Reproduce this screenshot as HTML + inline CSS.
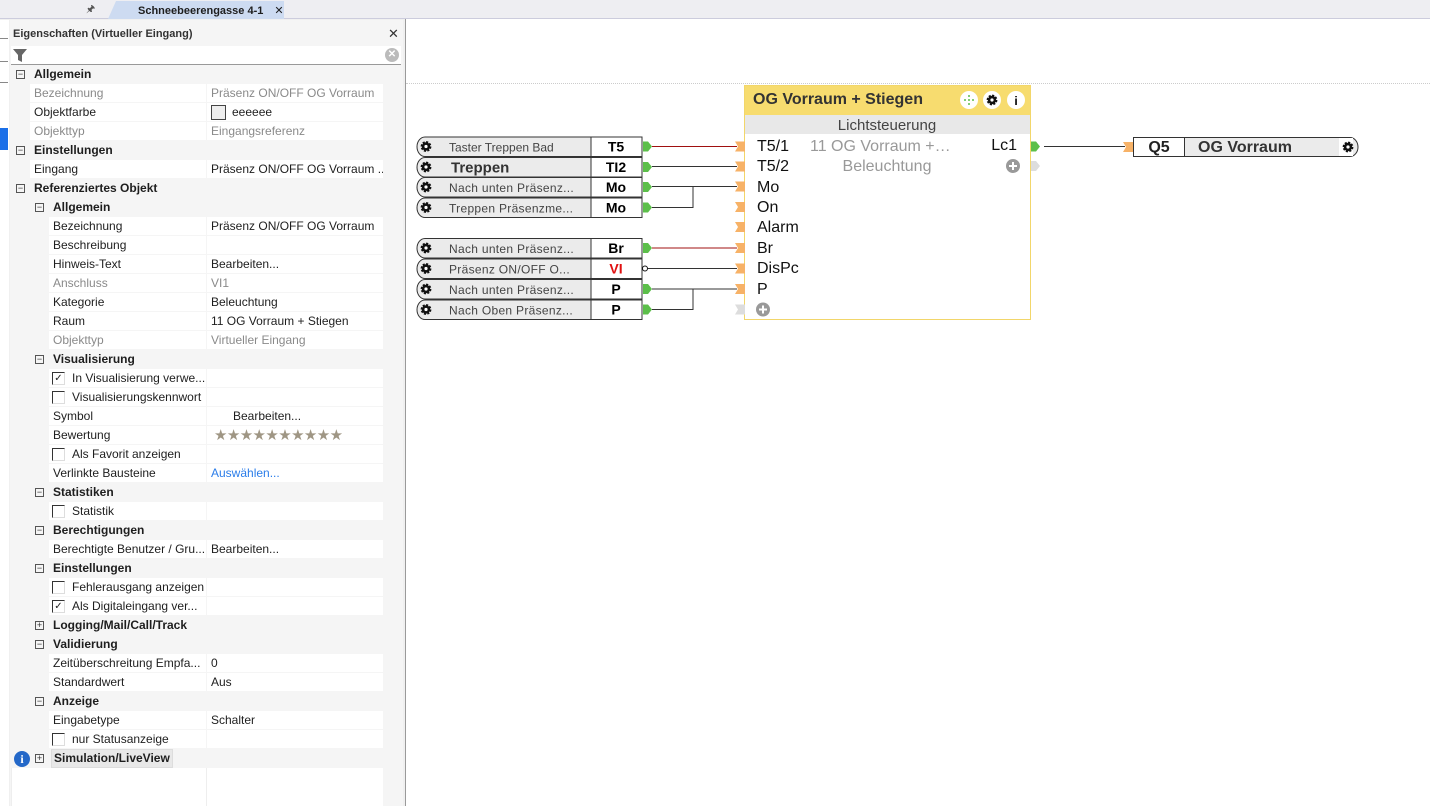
<!DOCTYPE html>
<html><head><meta charset="utf-8">
<style>
*{margin:0;padding:0;box-sizing:border-box}
body{width:1430px;height:806px;overflow:hidden;background:#f0f0f0;font-family:"Liberation Sans",sans-serif;font-size:12px;color:#1e1e1e;position:relative}
.abs{position:absolute}
.tabbar{left:0;top:0;width:1430px;height:19px;background:#eeeef2;border-bottom:1px solid #ccd}
.tab{left:108px;top:1px;width:176px;height:18px;background:#cddbf1;font-size:11px;font-weight:bold;color:#1e1e1e;padding:3px 0 0 30px;clip-path:polygon(8px 0,100% 0,100% 100%,0 100%)}
.panel{left:10px;top:20px;width:393px;height:786px;background:#f5f5f5}
.row{position:absolute;height:19px;line-height:19px;font-size:12px}
.cat{font-weight:bold;color:#1e1e1e}
.k{position:absolute;height:18px;background:#fff;line-height:18px;white-space:nowrap;overflow:hidden}
.v{position:absolute;left:207px;width:176px;height:18px;background:#fff;line-height:18px;padding-left:4px;white-space:nowrap;overflow:hidden}
.g{color:#8a8a8a}
.bx{position:absolute;width:9px;height:9px;border:1px solid #555;font-size:9px;line-height:7px;text-align:center;color:#333}
.cb{display:inline-block;width:13px;height:13px;border:1px solid #333;border-right-color:#ddd;border-bottom-color:#ddd;vertical-align:middle;margin-right:7px;font-size:10px;line-height:11px;text-align:center}
.canvas{left:405px;top:19px;width:1025px;height:787px;background:#fff;border-left:1px solid #9a9a9a}
</style></head><body>
<div class="abs tabbar"></div>
<div class="abs" style="left:86px;top:2px;font-size:10px;color:#555">&#x1F588;</div>
<div class="abs tab">Schneebeerengasse 4-1 <span style="font-weight:normal;margin-left:8px">✕</span></div>
<div class="abs" style="left:0;top:20px;width:9px;height:786px;background:#fff"></div>
<div class="abs" style="left:0;top:38px;width:8px;height:1px;background:#888"></div>
<div class="abs" style="left:0;top:61px;width:8px;height:1px;background:#888"></div>
<div class="abs" style="left:0;top:82px;width:8px;height:1px;background:#888"></div>
<div class="abs" style="left:0;top:128px;width:8px;height:22px;background:#1a6fe8"></div>
<div class="abs panel"></div>
<div class="abs" style="left:13px;top:28px;font-size:11px;font-weight:bold;color:#333">Eigenschaften (Virtueller Eingang)</div>
<div class="abs" style="left:388px;top:26px;font-size:13px;color:#333">✕</div>
<div class="abs" style="left:11px;top:46px;width:390px;height:19px;background:#fff;border-bottom:1px solid #999"></div>
<svg class="abs" style="left:13px;top:48px" width="14" height="14"><path d="M0 1h14l-5 6v7l-4-2v-5z" fill="#666"/></svg>
<div class="abs" style="left:385px;top:48px;width:14px;height:14px;border-radius:7px;background:#bbb;color:#fff;font-size:10px;line-height:14px;text-align:center;font-weight:bold">✕</div>
<div class="abs" style="left:11px;top:768px;width:372px;height:38px;background:#fff;border-left:1px solid #eee"></div>
<div class="abs" style="left:206px;top:768px;width:1px;height:38px;background:#eee"></div>

<div class="row cat" style="top:65px;left:34px">Allgemein</div><div class="bx" style="left:16px;top:70px">−</div>
<div class="k g" style="top:84px;left:30px;width:176px;padding-left:4px">Bezeichnung</div><div class="v g" style="top:84px">Präsenz ON/OFF OG Vorraum</div>
<div class="k" style="top:103px;left:30px;width:176px;padding-left:4px">Objektfarbe</div><div class="v" style="top:103px"><span style="display:inline-block;width:15px;height:15px;border:1px solid #444;background:#eee;vertical-align:middle;margin-right:6px"></span>eeeeee</div>
<div class="k g" style="top:122px;left:30px;width:176px;padding-left:4px">Objekttyp</div><div class="v g" style="top:122px">Eingangsreferenz</div>
<div class="row cat" style="top:141px;left:34px">Einstellungen</div><div class="bx" style="left:16px;top:146px">−</div>
<div class="k" style="top:160px;left:30px;width:176px;padding-left:4px">Eingang</div><div class="v" style="top:160px">Präsenz ON/OFF OG Vorraum ...</div>
<div class="row cat" style="top:179px;left:34px">Referenziertes Objekt</div><div class="bx" style="left:16px;top:184px">−</div>
<div class="row cat" style="top:198px;left:53px">Allgemein</div><div class="bx" style="left:35px;top:203px">−</div>
<div class="k" style="top:217px;left:49px;width:157px;padding-left:4px">Bezeichnung</div><div class="v" style="top:217px">Präsenz ON/OFF OG Vorraum</div>
<div class="k" style="top:236px;left:49px;width:157px;padding-left:4px">Beschreibung</div><div class="v" style="top:236px"></div>
<div class="k" style="top:255px;left:49px;width:157px;padding-left:4px">Hinweis-Text</div><div class="v" style="top:255px">Bearbeiten...</div>
<div class="k g" style="top:274px;left:49px;width:157px;padding-left:4px">Anschluss</div><div class="v g" style="top:274px">VI1</div>
<div class="k" style="top:293px;left:49px;width:157px;padding-left:4px">Kategorie</div><div class="v" style="top:293px">Beleuchtung</div>
<div class="k" style="top:312px;left:49px;width:157px;padding-left:4px">Raum</div><div class="v" style="top:312px">11 OG Vorraum + Stiegen</div>
<div class="k g" style="top:331px;left:49px;width:157px;padding-left:4px">Objekttyp</div><div class="v g" style="top:331px">Virtueller Eingang</div>
<div class="row cat" style="top:350px;left:53px">Visualisierung</div><div class="bx" style="left:35px;top:355px">−</div>
<div class="k" style="top:369px;left:49px;width:157px;padding-left:3px"><span class="cb">✓</span>In Visualisierung verwe...</div><div class="v" style="top:369px"></div>
<div class="k" style="top:388px;left:49px;width:157px;padding-left:3px"><span class="cb"></span>Visualisierungskennwort</div><div class="v" style="top:388px"></div>
<div class="k" style="top:407px;left:49px;width:157px;padding-left:4px">Symbol</div><div class="v" style="top:407px;padding-left:26px">Bearbeiten...</div>
<div class="k" style="top:426px;left:49px;width:157px;padding-left:4px">Bewertung</div><div class="v" style="top:426px;padding-left:7px;color:#9f9684;font-size:15px;letter-spacing:-0.6px;line-height:19px">★★★★★★★★★★</div>
<div class="k" style="top:445px;left:49px;width:157px;padding-left:3px"><span class="cb"></span>Als Favorit anzeigen</div><div class="v" style="top:445px"></div>
<div class="k" style="top:464px;left:49px;width:157px;padding-left:4px">Verlinkte Bausteine</div><div class="v" style="top:464px;color:#2b7de9">Auswählen...</div>
<div class="row cat" style="top:483px;left:53px">Statistiken</div><div class="bx" style="left:35px;top:488px">−</div>
<div class="k" style="top:502px;left:49px;width:157px;padding-left:3px"><span class="cb"></span>Statistik</div><div class="v" style="top:502px"></div>
<div class="row cat" style="top:521px;left:53px">Berechtigungen</div><div class="bx" style="left:35px;top:526px">−</div>
<div class="k" style="top:540px;left:49px;width:157px;padding-left:4px">Berechtigte Benutzer / Gru...</div><div class="v" style="top:540px">Bearbeiten...</div>
<div class="row cat" style="top:559px;left:53px">Einstellungen</div><div class="bx" style="left:35px;top:564px">−</div>
<div class="k" style="top:578px;left:49px;width:157px;padding-left:3px"><span class="cb"></span>Fehlerausgang anzeigen</div><div class="v" style="top:578px"></div>
<div class="k" style="top:597px;left:49px;width:157px;padding-left:3px"><span class="cb">✓</span>Als Digitaleingang ver...</div><div class="v" style="top:597px"></div>
<div class="row cat" style="top:616px;left:53px">Logging/Mail/Call/Track</div><div class="bx" style="left:35px;top:621px">+</div>
<div class="row cat" style="top:635px;left:53px">Validierung</div><div class="bx" style="left:35px;top:640px">−</div>
<div class="k" style="top:654px;left:49px;width:157px;padding-left:4px">Zeitüberschreitung Empfa...</div><div class="v" style="top:654px">0</div>
<div class="k" style="top:673px;left:49px;width:157px;padding-left:4px">Standardwert</div><div class="v" style="top:673px">Aus</div>
<div class="row cat" style="top:692px;left:53px">Anzeige</div><div class="bx" style="left:35px;top:697px">−</div>
<div class="k" style="top:711px;left:49px;width:157px;padding-left:4px">Eingabetype</div><div class="v" style="top:711px">Schalter</div>
<div class="k" style="top:730px;left:49px;width:157px;padding-left:3px"><span class="cb"></span>nur Statusanzeige</div><div class="v" style="top:730px"></div>
<div class="row cat" style="top:749px;left:51px;padding:0 2px;background:#e8e8e8;border:1px solid #ddd;height:19px;line-height:17px">Simulation/LiveView</div><div class="bx" style="left:35px;top:754px">+</div>
<div class="abs" style="left:14px;top:751px;width:16px;height:16px;border-radius:8px;background:#2468c8;color:#fff;font-weight:bold;font-size:12px;line-height:16px;text-align:center;font-family:'Liberation Serif',serif">i</div>

<div class="abs canvas"></div>
<div class="abs" style="left:406px;top:83px;width:1024px;border-top:1px dotted #ccc"></div>

<svg class="abs" style="left:0;top:0" width="1430" height="806" font-family="Liberation Sans, sans-serif">
<defs>
<g id="gear"><circle r="4.2" fill="#111"/><circle r="4.6" fill="none" stroke="#111" stroke-width="1.6" stroke-dasharray="2.2 1.4"/><circle r="1.6" fill="#fff"/></g>
<g id="gp"><path d="M0 -5h5l4 5l-4 5h-5z" fill="#5cbf4a"/></g>
<g id="op"><path d="M0 -5h10v10h-10l3 -5z" fill="#f7b267"/></g>
</defs>
<g stroke-width="1" fill="none">
<path d="M652 146.5H737" stroke="#a01010"/>
<path d="M652 166.5H737" stroke="#333"/>
<path d="M652 186.5H737M652 207.5H693V186.5" stroke="#333"/>
<path d="M652 248H737" stroke="#a01010"/>
<path d="M648 268.5H737" stroke="#333"/>
<path d="M652 289H737M652 309.5H693V289" stroke="#333"/>
<path d="M1044 146.5H1125" stroke="#333"/>
</g>
<g font-size="12">
<g transform="translate(0,136.5)">
 <path d="M425 0.5H642V20H425A8 9.75 0 0 1 425 0.5z" fill="#ebebeb" stroke="#333"/><rect x="591" y="0.5" width="51" height="19.5" fill="#fff" stroke="#333"/>
 <use href="#gear" x="426" y="10"/><text x="449" y="15" fill="#444">Taster Treppen Bad</text><text x="616" y="15" font-weight="bold" font-size="14" text-anchor="middle">T5</text><use href="#gp" x="643" y="10"/>
</g>
<g transform="translate(0,157)">
 <path d="M425 0.5H642V20H425A8 9.75 0 0 1 425 0.5z" fill="#ebebeb" stroke="#333"/><rect x="591" y="0.5" width="51" height="19.5" fill="#fff" stroke="#333"/>
 <use href="#gear" x="426" y="10"/><text x="451" y="15.5" fill="#333" font-weight="bold" font-size="15">Treppen</text><text x="616" y="15" font-weight="bold" font-size="14" text-anchor="middle">TI2</text><use href="#gp" x="643" y="10"/>
</g>
<g transform="translate(0,177)">
 <path d="M425 0.5H642V20H425A8 9.75 0 0 1 425 0.5z" fill="#ebebeb" stroke="#333"/><rect x="591" y="0.5" width="51" height="19.5" fill="#fff" stroke="#333"/>
 <use href="#gear" x="426" y="10"/><text x="449" y="15" fill="#444" letter-spacing=".3">Nach unten Präsenz...</text><text x="616" y="15" font-weight="bold" font-size="14" text-anchor="middle">Mo</text><use href="#gp" x="643" y="10"/>
</g>
<g transform="translate(0,197.5)">
 <path d="M425 0.5H642V20H425A8 9.75 0 0 1 425 0.5z" fill="#ebebeb" stroke="#333"/><rect x="591" y="0.5" width="51" height="19.5" fill="#fff" stroke="#333"/>
 <use href="#gear" x="426" y="10"/><text x="449" y="15" fill="#444" letter-spacing=".3">Treppen Präsenzme...</text><text x="616" y="15" font-weight="bold" font-size="14" text-anchor="middle">Mo</text><use href="#gp" x="643" y="10"/>
</g>
<g transform="translate(0,238)">
 <path d="M425 0.5H642V20H425A8 9.75 0 0 1 425 0.5z" fill="#ebebeb" stroke="#333"/><rect x="591" y="0.5" width="51" height="19.5" fill="#fff" stroke="#333"/>
 <use href="#gear" x="426" y="10"/><text x="449" y="15" fill="#444" letter-spacing=".3">Nach unten Präsenz...</text><text x="616" y="15" font-weight="bold" font-size="14" text-anchor="middle">Br</text><use href="#gp" x="643" y="10"/>
</g>
<g transform="translate(0,258.5)">
 <path d="M425 0.5H642V20H425A8 9.75 0 0 1 425 0.5z" fill="#ebebeb" stroke="#333"/><rect x="591" y="0.5" width="51" height="19.5" fill="#fff" stroke="#333"/>
 <use href="#gear" x="426" y="10"/><text x="449" y="15" fill="#444" letter-spacing=".3">Präsenz ON/OFF O...</text><text x="616" y="15" font-weight="bold" font-size="14" text-anchor="middle" fill="#e01010">VI</text><circle cx="645" cy="10" r="2.5" fill="#fff" stroke="#111"/>
</g>
<g transform="translate(0,279)">
 <path d="M425 0.5H642V20H425A8 9.75 0 0 1 425 0.5z" fill="#ebebeb" stroke="#333"/><rect x="591" y="0.5" width="51" height="19.5" fill="#fff" stroke="#333"/>
 <use href="#gear" x="426" y="10"/><text x="449" y="15" fill="#444" letter-spacing=".3">Nach unten Präsenz...</text><text x="616" y="15" font-weight="bold" font-size="14" text-anchor="middle">P</text><use href="#gp" x="643" y="10"/>
</g>
<g transform="translate(0,299.5)">
 <path d="M425 0.5H642V20H425A8 9.75 0 0 1 425 0.5z" fill="#ebebeb" stroke="#333"/><rect x="591" y="0.5" width="51" height="19.5" fill="#fff" stroke="#333"/>
 <use href="#gear" x="426" y="10"/><text x="449" y="15" fill="#444" letter-spacing=".3">Nach Oben Präsenz...</text><text x="616" y="15" font-weight="bold" font-size="14" text-anchor="middle">P</text><use href="#gp" x="643" y="10"/>
</g>
</g>
<rect x="744.5" y="85.5" width="286" height="234" fill="#fff" stroke="#f2d66a"/>
<rect x="745" y="86" width="285" height="29" fill="#f7dc6f"/>
<rect x="745" y="115" width="285" height="19" fill="#e8e8e8"/>
<text x="753" y="104" font-size="16" font-weight="bold" fill="#333">OG Vorraum + Stiegen</text>
<circle cx="969" cy="100" r="9" fill="#fff"/><g fill="#5cbf4a"><circle cx="969" cy="96" r="1"/><circle cx="969" cy="104" r="1"/><circle cx="965" cy="100" r="1"/><circle cx="973" cy="100" r="1"/><circle cx="969" cy="100" r="1"/></g>
<circle cx="992" cy="100" r="9" fill="#fff"/><use href="#gear" x="992" y="100"/>
<circle cx="1016" cy="100" r="9" fill="#fff"/><text x="1016" y="105" font-size="12" font-weight="bold" text-anchor="middle">i</text>
<text x="887" y="130" font-size="15" text-anchor="middle" fill="#444">Lichtsteuerung</text>
<g font-size="16" fill="#111">
<text x="757" y="151">T5/1</text><text x="757" y="171">T5/2</text><text x="757" y="192">Mo</text><text x="757" y="212">On</text><text x="757" y="232">Alarm</text><text x="757" y="253">Br</text><text x="757" y="273">DisPc</text><text x="757" y="294">P</text>
<text x="1017" y="150" text-anchor="end">Lc1</text>
</g>
<text x="810" y="151" font-size="16" fill="#999">11 OG Vorraum +…</text>
<text x="887" y="171" font-size="16" fill="#999" text-anchor="middle">Beleuchtung</text>
<g><use href="#op" x="735" y="146.5"/><use href="#op" x="735" y="166.5"/><use href="#op" x="735" y="186.5"/><use href="#op" x="735" y="207"/><use href="#op" x="735" y="227"/><use href="#op" x="735" y="248"/><use href="#op" x="735" y="268.5"/><use href="#op" x="735" y="289"/></g>
<path d="M735 304.5h10v10h-10l3 -5z" fill="#ddd"/>
<circle cx="763" cy="309.5" r="7" fill="#999"/><path d="M763 305.5v8M759 309.5h8" stroke="#fff" stroke-width="2"/>
<circle cx="1013" cy="166" r="7" fill="#999"/><path d="M1013 162v8M1009 166h8" stroke="#fff" stroke-width="2"/>
<use href="#gp" x="1031" y="146.5"/>
<path d="M1031 161h5l4 5l-4 5h-5z" fill="#ddd"/>
<path d="M1133.5 137.5H1350A8 9.5 0 0 1 1350 156.5H1133.5z" fill="#ebebeb" stroke="#333"/>
<rect x="1133.5" y="137.5" width="51" height="19" fill="#fff" stroke="#333"/>
<use href="#op" x="1123" y="147"/>
<text x="1159" y="152" font-size="16" font-weight="bold" text-anchor="middle" fill="#222">Q5</text>
<text x="1198" y="152" font-size="16" font-weight="bold" fill="#333">OG Vorraum</text>
<rect x="1339" y="138" width="14" height="18" fill="#fff"/><use href="#gear" x="1348" y="147"/>
</svg>
</body></html>
